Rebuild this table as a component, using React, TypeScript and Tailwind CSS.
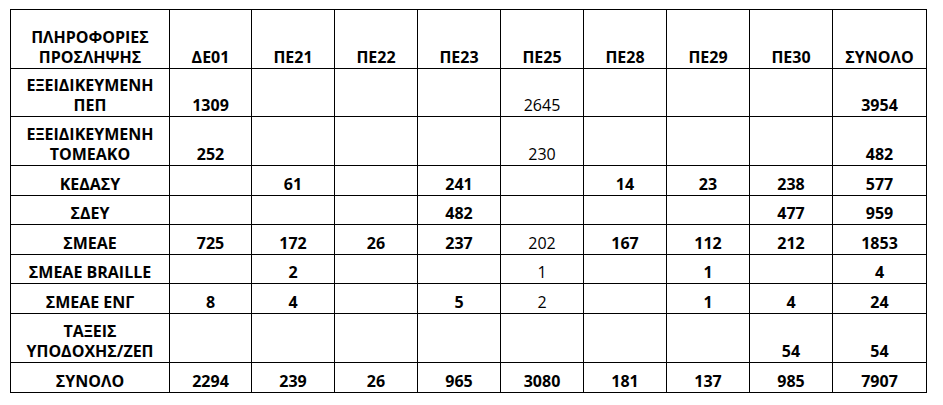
import * as React from "react";

type Cell = string | { v: string; light: true };

const head = ["ΔΕ01", "ΠΕ21", "ΠΕ22", "ΠΕ23", "ΠΕ25", "ΠΕ28", "ΠΕ29", "ΠΕ30", "ΣΥΝΟΛΟ"];

const rows: { label: string[]; h: string; cells: Cell[] }[] = [
  { label: ["ΕΞΕΙΔΙΚΕΥΜΕΝΗ", "ΠΕΠ"], h: "h-[48px]", cells: ["1309", "", "", "", { v: "2645", light: true }, "", "", "", "3954"] },
  { label: ["ΕΞΕΙΔΙΚΕΥΜΕΝΗ", "ΤΟΜΕΑΚΟ"], h: "h-[49px]", cells: ["252", "", "", "", { v: "230", light: true }, "", "", "", "482"] },
  { label: ["ΚΕΔΑΣΥ"], h: "h-[30px]", cells: ["", "61", "", "241", "", "14", "23", "238", "577"] },
  { label: ["ΣΔΕΥ"], h: "h-[29px]", cells: ["", "", "", "482", "", "", "", "477", "959"] },
  { label: ["ΣΜΕΑΕ"], h: "h-[30px]", cells: ["725", "172", "26", "237", { v: "202", light: true }, "167", "112", "212", "1853"] },
  { label: ["ΣΜΕΑΕ BRAILLE"], h: "h-[29px]", cells: ["", "2", "", "", { v: "1", light: true }, "", "1", "", "4"] },
  { label: ["ΣΜΕΑΕ ΕΝΓ"], h: "h-[30px]", cells: ["8", "4", "", "5", { v: "2", light: true }, "", "1", "4", "24"] },
  { label: ["ΤΑΞΕΙΣ", "ΥΠΟΔΟΧΗΣ/ΖΕΠ"], h: "h-[49px]", cells: ["", "", "", "", "", "", "", "54", "54"] },
  { label: ["ΣΥΝΟΛΟ"], h: "h-[30px]", cells: ["2294", "239", "26", "965", "3080", "181", "137", "985", "7907"] },
];

const td = "border border-black p-0 pb-[1px] align-bottom text-center leading-[20px]";

export default function App() {
  return (
    <div className="min-h-[405px] w-[943px] bg-white pl-[10px] pt-[9px] font-['Open_Sans',sans-serif] text-[16px] text-black">
      <table className="w-[917px] table-fixed border-collapse">
        <colgroup>
          <col className="w-[159px]" />
          <col className="w-[82px]" />
          <col className="w-[83px]" />
          <col className="w-[83px]" />
          <col className="w-[83px]" />
          <col className="w-[83px]" />
          <col className="w-[83px]" />
          <col className="w-[83px]" />
          <col className="w-[83px]" />
          <col className="w-[94px]" />
        </colgroup>
        <tbody>
          <tr className="h-[59px]">
            <td className={`${td} font-bold`}>
              ΠΛΗΡΟΦΟΡΙΕΣ
              <br />
              ΠΡΟΣΛΗΨΗΣ
            </td>
            {head.map((h) => (
              <td key={h} className={`${td} font-bold`}>
                {h}
              </td>
            ))}
          </tr>
          {rows.map((r, i) => (
            <tr key={i} className={r.h}>
              <td className={`${td} font-bold`}>
                {r.label.map((l, j) => (
                  <React.Fragment key={j}>
                    {j > 0 && <br />}
                    {l}
                  </React.Fragment>
                ))}
              </td>
              {r.cells.map((c, j) =>
                typeof c === "string" ? (
                  <td key={j} className={`${td} font-bold`}>
                    {c}
                  </td>
                ) : (
                  <td key={j} className={`${td} font-normal`}>
                    {c.v}
                  </td>
                )
              )}
            </tr>
          ))}
        </tbody>
      </table>
    </div>
  );
}
